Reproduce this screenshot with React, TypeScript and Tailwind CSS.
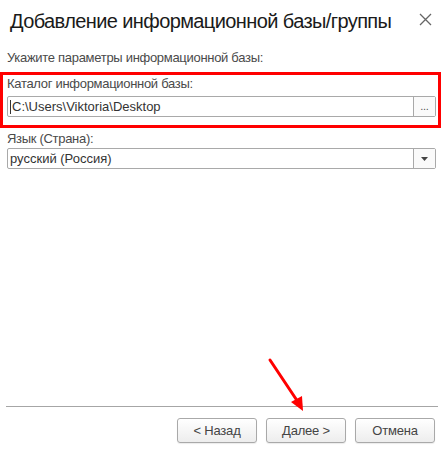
const font = { fontFamily: '"Liberation Sans", Arial, sans-serif' }

function FieldButton({ children }: { children: React.ReactNode }) {
  return (
    <div className="flex w-[22px] items-center justify-center border-l border-[#a9a9a9] bg-[#fafafa] text-[11px] text-[#555]">
      {children}
    </div>
  )
}

function DialogButton({ label }: { label: string }) {
  return (
    <button className="h-[25px] w-[80px] rounded-[3px] border border-[#a9a9a9] bg-gradient-to-b from-white to-[#ededed] text-[13px] tracking-[-0.2px] text-[#444] shadow-[0_1px_1px_rgba(0,0,0,0.08)]">
      {label}
    </button>
  )
}

export default function App() {
  return (
    <div
      className="relative flex h-[453px] w-[444px] flex-col overflow-hidden bg-white text-[13px] leading-[15px] tracking-[-0.3px] text-[#4a4a4a]"
      style={font}
    >
      {/* header */}
      <div className="flex h-[41px] items-center justify-between pl-[10px] pr-[12px]">
        <h1 className="whitespace-nowrap text-[20px] leading-none tracking-[-0.6px] text-[#1a1a1a]">
          Добавление информационной базы/группы
        </h1>
        <svg width="13" height="13" viewBox="0 0 13 13" className="mb-[2px]">
          <path d="M1 1 L12 12 M12 1 L1 12" stroke="#666" strokeWidth="1.3" />
        </svg>
      </div>

      <div className="mt-[9px] pl-[7px]">Укажите параметры информационной базы:</div>

      {/* catalog field, framed */}
      <div className="mt-[7px] w-[441px] border-[3px] border-[#ff0000] pb-[8px] pl-[4px] pr-[2px] pt-[1px]">
        <div>Каталог информационной базы:</div>
        <div className="mt-[5px] flex h-[21px] rounded-[2px] border border-[#a9a9a9] bg-white">
          <div className="flex flex-1 items-center pl-[2px] tracking-normal text-[#333]">
            <span className="mr-[1px] h-[14px] w-px bg-[#333]" />
            C:\Users\Viktoria\Desktop
          </div>
          <FieldButton>...</FieldButton>
        </div>
      </div>

      <div className="mt-[3px] pl-[7px]">Язык (Страна):</div>
      <div className="ml-[7px] mt-[2px] flex h-[21px] w-[429px] rounded-[2px] border border-[#a9a9a9] bg-white">
        <div className="flex flex-1 items-center pl-[2px] tracking-normal text-[#333]">русский (Россия)</div>
        <FieldButton>
          <svg width="7" height="4" viewBox="0 0 7 4">
            <path d="M0 0 H7 L3.5 4 Z" fill="#444" />
          </svg>
        </FieldButton>
      </div>

      <div className="flex-1" />

      {/* footer */}
      <div className="mx-[6px] h-px bg-[#a6a6a6]" />
      <div className="flex justify-end gap-[9px] pb-[10px] pr-[9px] pt-[11px]">
        <DialogButton label="< Назад" />
        <DialogButton label="Далее >" />
        <DialogButton label="Отмена" />
      </div>

      {/* annotation arrow */}
      <svg className="absolute left-[262px] top-[354px]" width="50" height="64" viewBox="0 0 50 64">
        <line x1="8" y1="6" x2="36" y2="48" stroke="#ff0000" strokeWidth="3" strokeLinecap="round" />
        <path d="M41 57 L29 48 L40 42 Z" fill="#ff0000" />
      </svg>
    </div>
  )
}
